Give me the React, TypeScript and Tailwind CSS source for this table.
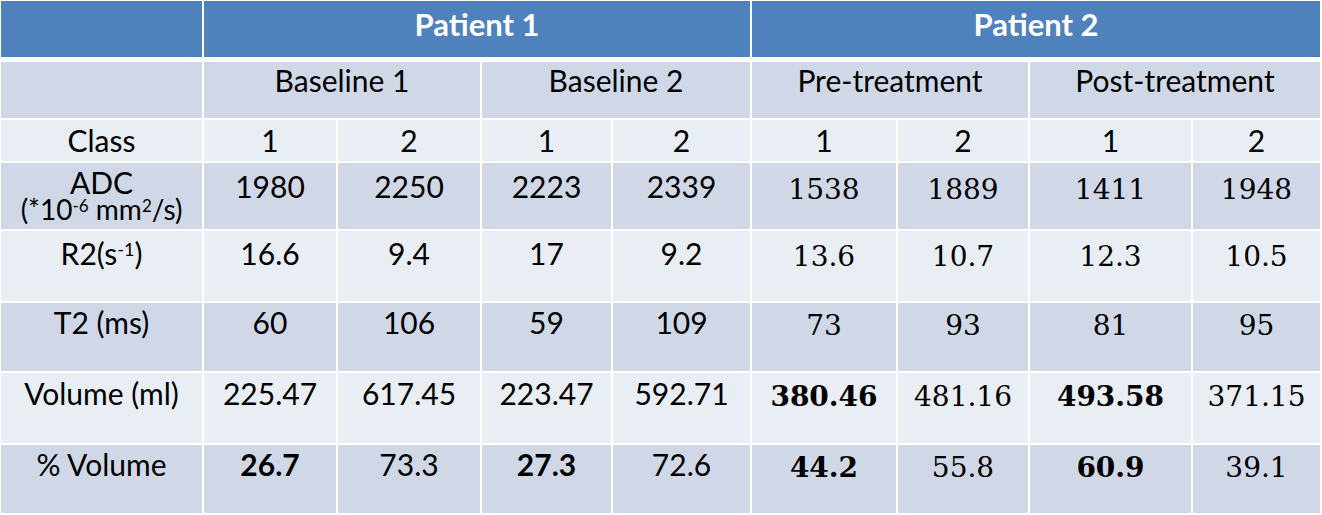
import React from 'react';

const sans = "font-['Lato','Liberation_Sans',sans-serif]";
const serif = "font-['DejaVu_Serif','Liberation_Serif',serif]";

type Val = {v: string; bold?: boolean};

interface Row {
    label: React.ReactNode;
    tone: 'dark' | 'light';
    pad: string;
    values: Val[];
}

const rows: Row[] = [
    {
        label: (
            <div className="flex flex-col items-center">
                <span className="leading-[27px]">ADC</span>
                <span className="text-[28px] leading-[26px]">
                    (*10<sup className="text-[17px] leading-none">-6</sup> mm
                    <sup className="text-[17px] leading-none">2</sup>/s)
                </span>
            </div>
        ),
        tone: 'dark',
        pad: 'pt-[6px]',
        values: [{v: '1980'}, {v: '2250'}, {v: '2223'}, {v: '2339'}, {v: '1538'}, {v: '1889'}, {v: '1411'}, {v: '1948'}]
    },
    {
        label: (
            <span>
                R2(s<sup className="text-[18px] leading-none">-1</sup>)
            </span>
        ),
        tone: 'light',
        pad: 'pt-[5px]',
        values: [{v: '16.6'}, {v: '9.4'}, {v: '17'}, {v: '9.2'}, {v: '13.6'}, {v: '10.7'}, {v: '12.3'}, {v: '10.5'}]
    },
    {
        label: 'T2 (ms)',
        tone: 'dark',
        pad: 'pt-[2px]',
        values: [{v: '60'}, {v: '106'}, {v: '59'}, {v: '109'}, {v: '73'}, {v: '93'}, {v: '81'}, {v: '95'}]
    },
    {
        label: 'Volume (ml)',
        tone: 'light',
        pad: 'pt-[3px]',
        values: [
            {v: '225.47'},
            {v: '617.45'},
            {v: '223.47'},
            {v: '592.71'},
            {v: '380.46', bold: true},
            {v: '481.16'},
            {v: '493.58', bold: true},
            {v: '371.15'}
        ]
    },
    {
        label: '% Volume',
        tone: 'dark',
        pad: 'pt-[2px]',
        values: [
            {v: '26.7', bold: true},
            {v: '73.3'},
            {v: '27.3', bold: true},
            {v: '72.6'},
            {v: '44.2', bold: true},
            {v: '55.8'},
            {v: '60.9', bold: true},
            {v: '39.1'}
        ]
    }
];

const toneClass = (tone: 'dark' | 'light') => (tone === 'dark' ? 'bg-[#d0d8e8]' : 'bg-[#e9edf4]');

export default function App() {
    return (
        <div className={`w-[1322px] h-[515px] bg-white overflow-hidden text-black ${sans}`}>
            <div className="grid grid-cols-[201px_132px_142px_129px_137px_144px_130px_161px_127px] grid-rows-[59px_56px_41px_66px_70px_68px_70px_68px] gap-[2px] pl-[1px] pt-[1px] text-[30px] leading-[35px] text-center">
                {/* header */}
                <div className="h-[56px] bg-[#4f81bd]" />
                <div className="h-[56px] col-span-4 bg-[#4f81bd] text-white font-bold text-[31px] pt-[6px]">
                    Patient 1
                </div>
                <div className="h-[56px] col-span-4 bg-[#4f81bd] text-white font-bold text-[31px] pt-[6px]">
                    Patient 2
                </div>

                {/* timepoints */}
                <div className="bg-[#d0d8e8]" />
                {['Baseline 1', 'Baseline 2', 'Pre-treatment', 'Post-treatment'].map(t => (
                    <div key={t} className="col-span-2 bg-[#d0d8e8] pt-[1px]">
                        {t}
                    </div>
                ))}

                {/* class */}
                <div className="bg-[#e9edf4] pt-[3px]">Class</div>
                {['1', '2', '1', '2', '1', '2', '1', '2'].map((c, i) => (
                    <div key={i} className="bg-[#e9edf4] pt-[3px]">
                        {c}
                    </div>
                ))}

                {rows.map((row, ri) => (
                    <React.Fragment key={ri}>
                        <div className={`${toneClass(row.tone)} ${row.pad}`}>{row.label}</div>
                        {row.values.map((val, i) => (
                            <div
                                key={i}
                                className={`${toneClass(row.tone)} ${row.pad} ${
                                    i >= 4 ? `${serif} text-[28px]` : ''
                                } ${val.bold ? 'font-bold' : ''}`}
                            >
                                <span className={i >= 4 ? 'relative top-[3px]' : ''}>{val.v}</span>
                            </div>
                        ))}
                    </React.Fragment>
                ))}
            </div>
        </div>
    );
}
